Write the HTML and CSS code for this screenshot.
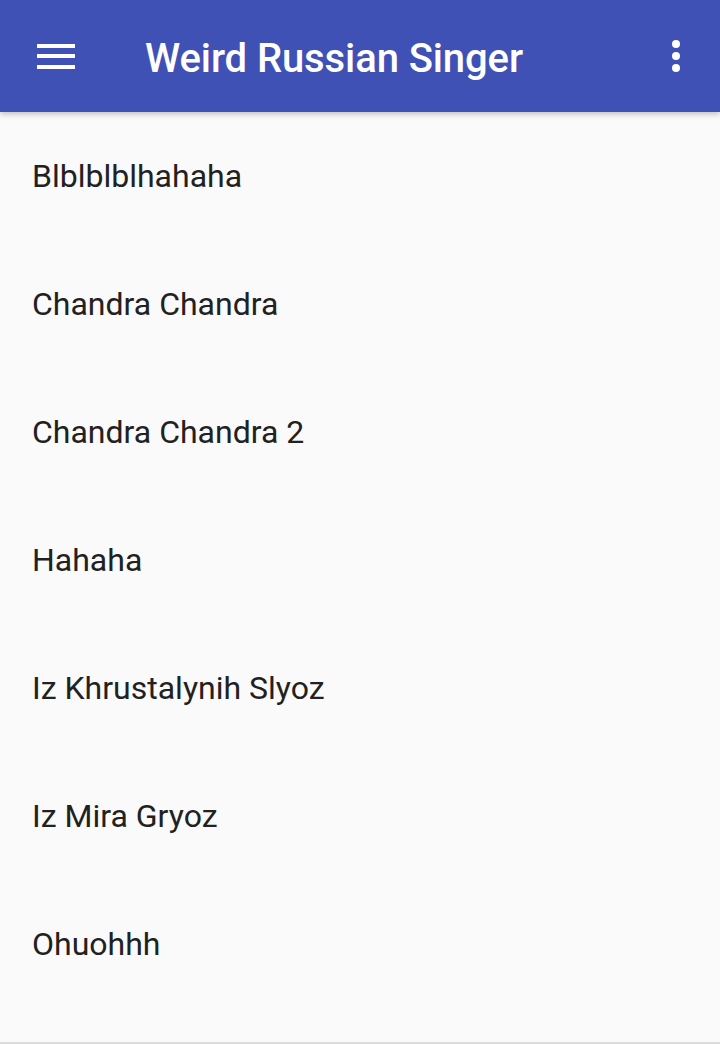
FILE: index.html
```html
<!DOCTYPE html>
<html lang="en">
<head>
  <meta charset="UTF-8">
  <title>Weird Russian Singer</title>
  <link rel="stylesheet" href="styles.css">
</head>
<body>

  <header class="toolbar">
    <button class="icon-btn menu-btn" aria-label="Menu">
      <svg width="48" height="48" viewBox="0 0 48 48">
        <rect x="6" y="12" width="38" height="4" fill="#fff"/>
        <rect x="6" y="22" width="38" height="4" fill="#fff"/>
        <rect x="6" y="33" width="38" height="4" fill="#fff"/>
      </svg>
    </button>
    <h1 class="title">Weird Russian Singer</h1>
    <button class="icon-btn more-btn" aria-label="More options">
      <svg width="48" height="48" viewBox="0 0 48 48">
        <circle cx="24" cy="12" r="4" fill="#fff"/>
        <circle cx="24" cy="24" r="4" fill="#fff"/>
        <circle cx="24" cy="36" r="4" fill="#fff"/>
      </svg>
    </button>
  </header>

  <ul class="song-list">
    <li class="song">Blblblblhahaha</li>
    <li class="song">Chandra Chandra</li>
    <li class="song">Chandra Chandra 2</li>
    <li class="song">Hahaha</li>
    <li class="song">Iz Khrustalynih Slyoz</li>
    <li class="song">Iz Mira Gryoz</li>
    <li class="song">Ohuohhh</li>
  </ul>

</body>
</html>
```

FILE: styles.css
```css
body {
  margin: 0;
  height: 1044px;
  overflow: hidden;
  font-family: Roboto, "Noto Sans", sans-serif;
  background: #fafafa;
  color: #212121;
}

.toolbar {
  height: 112px;
  background-color: #3f51b5;
  display: flex;
  align-items: center;
  padding: 0 20px 0 31px;
  box-shadow: 0 2px 6px rgba(0, 0, 0, 0.25);
  position: relative;
  z-index: 1;
}

.icon-btn {
  background: none;
  border: none;
  padding: 0;
  width: 48px;
  height: 48px;
  cursor: pointer;
}

.icon-btn svg {
  display: block;
}

.title {
  flex: 1;
  margin: 4px 0 0 66px;
  color: #fff;
  font-size: 40px;
  font-weight: 500;
  letter-spacing: -0.1px;
}

.song-list {
  list-style: none;
  margin: 0;
  padding: 0;
  height: 930px;
  border-bottom: 2px solid #dcdcdc;
}

.song {
  height: 128px;
  display: flex;
  align-items: center;
  padding-left: 32px;
  font-size: 32px;
}
```
